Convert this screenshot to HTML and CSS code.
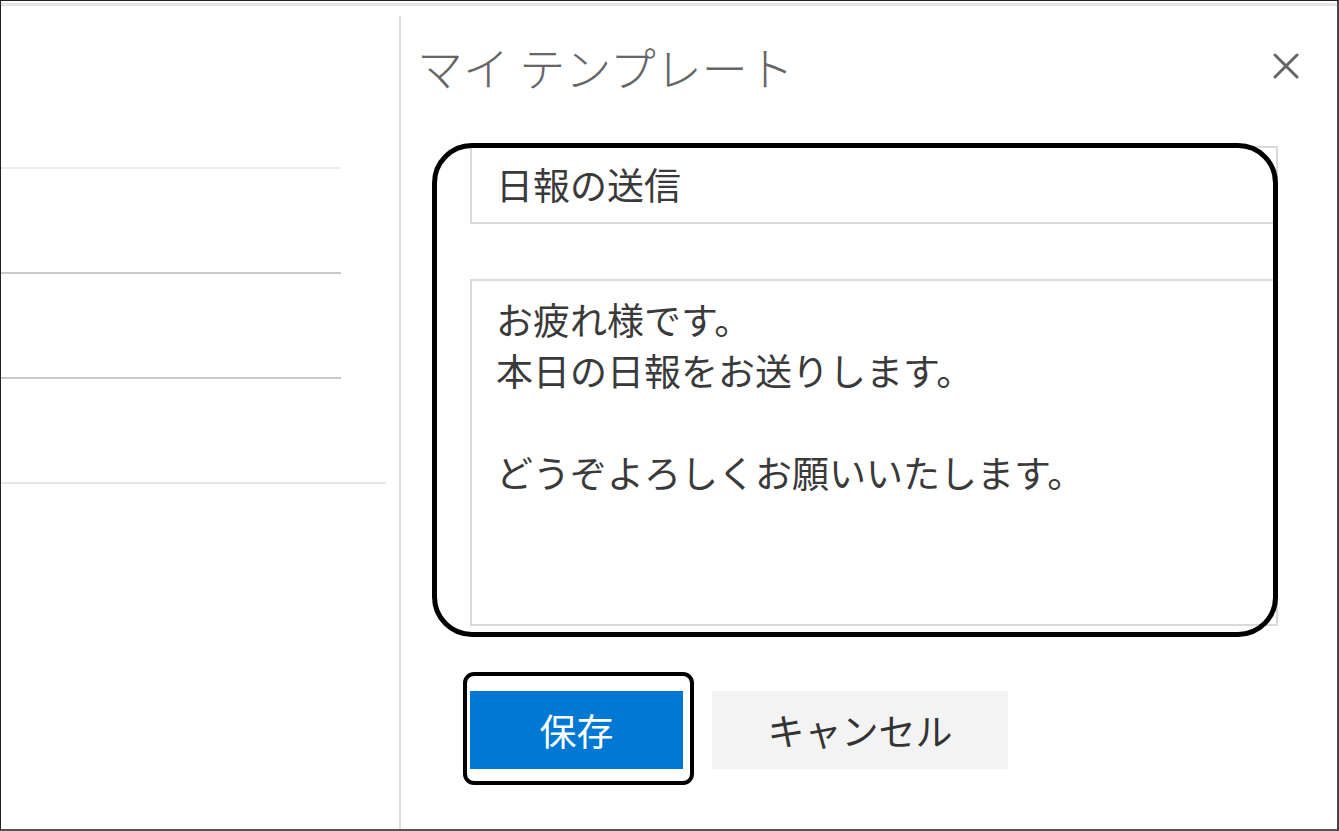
FILE: index.html
```html
<!DOCTYPE html>
<html lang="ja">
<head>
<meta charset="utf-8">
<title>マイ テンプレート</title>
<link rel="stylesheet" href="styles.css">
</head>
<body>
<div class="frame">
  <div class="topline"></div>
  <div class="main">
    <div class="left">
      <div class="row row-first"></div>
      <div class="row row-dark"></div>
      <div class="row row-dark"></div>
      <div class="row row-wide"></div>
    </div>
    <div class="divider"></div>
    <div class="panel">
      <div class="header">
        <h1 class="title">マイ テンプレート</h1>
        <button class="close" aria-label="閉じる">
          <svg width="26" height="26" viewBox="0 0 26 26"><path d="M2 2 L24 24 M24 2 L2 24" stroke="#666" stroke-width="3" stroke-linecap="round" fill="none"/></svg>
        </button>
      </div>
      <div class="form">
        <div class="field-input">日報の送信</div>
        <div class="field-area">お疲れ様です。<br>本日の日報をお送りします。<br><br>どうぞよろしくお願いいたします。</div>
        <div class="actions">
          <button class="btn btn-primary">保存</button>
          <button class="btn btn-default">キャンセル</button>
        </div>
      </div>
    </div>
  </div>
  <div class="mark mark-fields"></div>
  <div class="mark mark-save"></div>
</div>
</body>
</html>
```
FILE: styles.css
```css
* { box-sizing: border-box; }
html, body { margin: 0; padding: 0; background: #fff; }
body {
  width: 1339px;
  height: 831px;
  overflow: hidden;
  font-family: "Noto Sans CJK JP", "Noto Sans", sans-serif;
  color: #333;
}
.frame {
  position: relative;
  width: 1339px;
  height: 831px;
  border-top: 1px solid #222;
  border-left: 1px solid #222;
  border-right: 2px solid #444;
  border-bottom: 2px solid #555;
  display: flex;
  flex-direction: column;
}
.topline {
  height: 3px;
  margin-top: 2px;
  background: #e4e4e4;
  border-top-right-radius: 4px;
}
.main {
  flex: 1;
  display: flex;
  min-height: 0;
}
.left {
  width: 398px;
  padding-top: 161px;
  display: flex;
  flex-direction: column;
}
.row {
  width: 340px;
  height: 105px;
  border-bottom: 2px solid #c9c9c9;
}
.row-first {
  height: 2px;
  border-bottom: 2px solid #ebebeb;
}
.row-wide {
  width: 385px;
  border-bottom: 2px solid #e6e6e6;
}
.divider {
  width: 2px;
  margin-top: 10px;
  background: #dcdcdc;
}
.panel {
  flex: 1;
  display: flex;
  flex-direction: column;
  padding-left: 16px;
}
.header {
  display: flex;
  align-items: center;
  justify-content: space-between;
  padding-top: 25px;
  padding-right: 38px;
}
.title {
  margin: 0;
  font-size: 46px;
  line-height: 70px;
  font-weight: 300;
  color: #666;
}
.close {
  border: 0;
  background: none;
  padding: 0;
  width: 26px;
  height: 26px;
  display: flex;
  margin-top: 0;
}
.form {
  margin-left: 53px;
  margin-top: 45px;
  width: 808px;
  display: flex;
  flex-direction: column;
}
.field-input {
  height: 78px;
  border: 2px solid #dadada;
  padding: 0 0 0 24px;
  font-size: 37px;
  line-height: 72px;
  color: #3a3a3a;
}
.field-area {
  margin-top: 55px;
  height: 347px;
  border: 2px solid #dadada;
  padding: 13px 0 0 24px;
  font-size: 37px;
  line-height: 51px;
  color: #3a3a3a;
}
.actions {
  display: flex;
  gap: 29px;
  margin-top: 65px;
}
.btn {
  height: 78px;
  border: 0;
  font-family: inherit;
  font-size: 37px;
  padding: 0;
}
.btn-primary {
  width: 213px;
  background: #0078d4;
  color: #fff;
}
.btn-default {
  width: 296px;
  background: #f3f3f3;
  color: #333;
}
.mark {
  position: absolute;
  border: 5px solid #000;
  pointer-events: none;
}
.mark-fields {
  left: 431px;
  top: 142px;
  width: 846px;
  height: 494px;
  border-radius: 40px;
}
.mark-save {
  left: 462px;
  top: 671px;
  width: 231px;
  height: 113px;
  border-width: 4px;
  border-radius: 11px;
}
```
